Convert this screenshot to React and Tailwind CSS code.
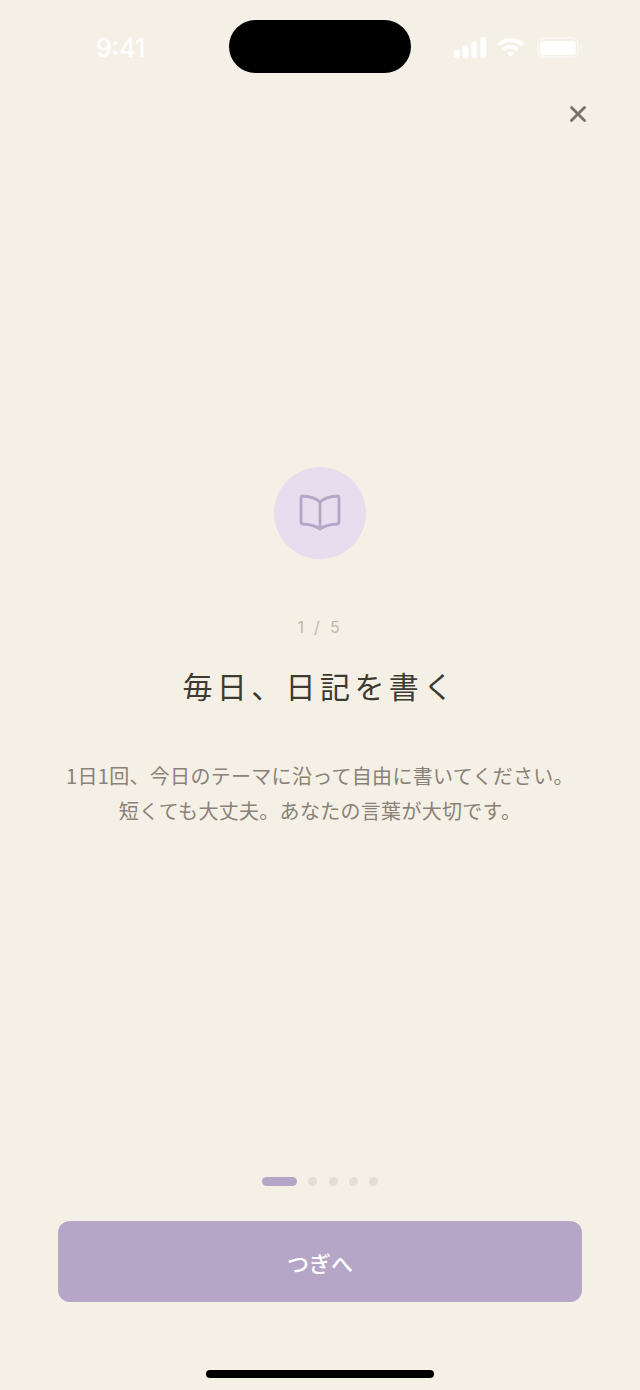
import { X } from 'lucide-react';

const jp = "font-['Noto_Sans_CJK_JP',sans-serif]";

const StatusIcons = () => (
  <div className="flex items-center">
    <svg width="33" height="21" viewBox="0 0 33 21" fill="#ffffff">
      <rect x="0" y="13" width="6" height="8" rx="2" />
      <rect x="8.5" y="9" width="6" height="12" rx="2" />
      <rect x="17.5" y="4.5" width="5.5" height="16.5" rx="2" />
      <rect x="26.5" y="0" width="5.5" height="21" rx="2" />
    </svg>
    <svg className="ml-[10px]" width="27" height="21" viewBox="0 0 27 21" fill="none" stroke="#ffffff" strokeWidth="3.8">
      <path d="M1.5 8 C 8 1.4, 19 1.4, 25.5 8" />
      <path d="M6.4 12.4 C 10.4 8.6, 16.6 8.6, 20.6 12.4" />
      <path d="M10.4 16 L13.5 19.5 L16.6 16 C14.6 14.8, 12.4 14.8, 10.4 16 Z" fill="#ffffff" strokeWidth="1" />
    </svg>
    <div className="ml-[13px] flex items-center gap-[1px]">
      <div className="flex h-[21px] w-[42px] items-center justify-center rounded-[7px] border-2 border-white/40">
        <div className="h-[14px] w-[36px] rounded-[4px] bg-white" />
      </div>
      <div className="h-[7px] w-[2px] rounded-r bg-white/40" />
    </div>
  </div>
);

const BookIcon = () => (
  <svg width="44" height="38" viewBox="0 0 44 38" fill="none" stroke="#b5a5c7" strokeWidth="2.8" strokeLinejoin="round" strokeLinecap="round">
    <path d="M22 8 C 18 4, 12 2.5, 5 2 C 3.6 2, 3 2.8, 3 4 V 28 C 3 29.4, 3.8 30, 5 30 C 12 30.5, 18 32, 22 35 C 26 32, 32 30.5, 39 30 C 40.2 30, 41 29.4, 41 28 V 4 C 41 2.8, 40.4 2, 39 2 C 32 2.5, 26 4, 22 8 Z" />
    <path d="M22 8 V 35" />
  </svg>
);

export default function App() {
  return (
    <div className={`flex h-[1390px] w-[640px] flex-col overflow-hidden bg-[#f4f0e6] ${jp}`}>
      <div className="flex h-[74px] items-start justify-between pl-[96px] pr-[58px] pt-[20px]">
        <span className="mt-[12px] font-['Inter',sans-serif] text-[25px] leading-[32px] font-medium text-white">9:41</span>
        <div className="ml-[41px] h-[53px] w-[182px] rounded-[27px] bg-black" />
        <div className="mt-[17px]"><StatusIcons /></div>
      </div>

      <div className="flex justify-end pr-[49px] pt-[27px]">
        <X size={26} strokeWidth={2.6} className="text-[#7a7168]" />
      </div>

      <div className="flex flex-col items-center pt-[340px]">
        <div className="flex h-[92px] w-[92px] items-center justify-center rounded-full bg-[#e6deef]">
          <BookIcon />
        </div>
        <p className="mt-[56px] font-['Inter',sans-serif] text-[16px] leading-[24px] tracking-[2.8px] text-[#bfb7ad]">1 / 5</p>
        <h1 className="mt-[24px] text-[30px] leading-[44px] font-normal tracking-[4.4px] text-[#3d3a32]">毎日、日記を書く</h1>
        <div className="mt-[51px] text-center text-[20px] leading-[35px] tracking-[0.3px] text-[#8a8178]">
          <p>1日1回、今日のテーマに沿って自由に書いてください。</p>
          <p>短くても大丈夫。あなたの言葉が大切です。</p>
        </div>
      </div>

      <div className="mt-auto flex flex-col items-center">
        <div className="flex items-center gap-[11.25px]">
          <div className="h-[9px] w-[35px] rounded-full bg-[#b5a5c7]" />
          <div className="h-[9px] w-[9px] rounded-full bg-[#e3dfd4]" />
          <div className="h-[9px] w-[9px] rounded-full bg-[#e3dfd4]" />
          <div className="h-[9px] w-[9px] rounded-full bg-[#e3dfd4]" />
          <div className="h-[9px] w-[9px] rounded-full bg-[#e3dfd4]" />
        </div>
        <button className="mt-[35px] flex h-[81px] w-[524px] items-center justify-center rounded-[12px] bg-[#b5a5c7] pt-[2px] text-[22px] font-medium text-white">
          つぎへ
        </button>
        <div className="mb-[12px] mt-[68px] h-[8px] w-[228px] rounded-full bg-black" />
      </div>
    </div>
  );
}
